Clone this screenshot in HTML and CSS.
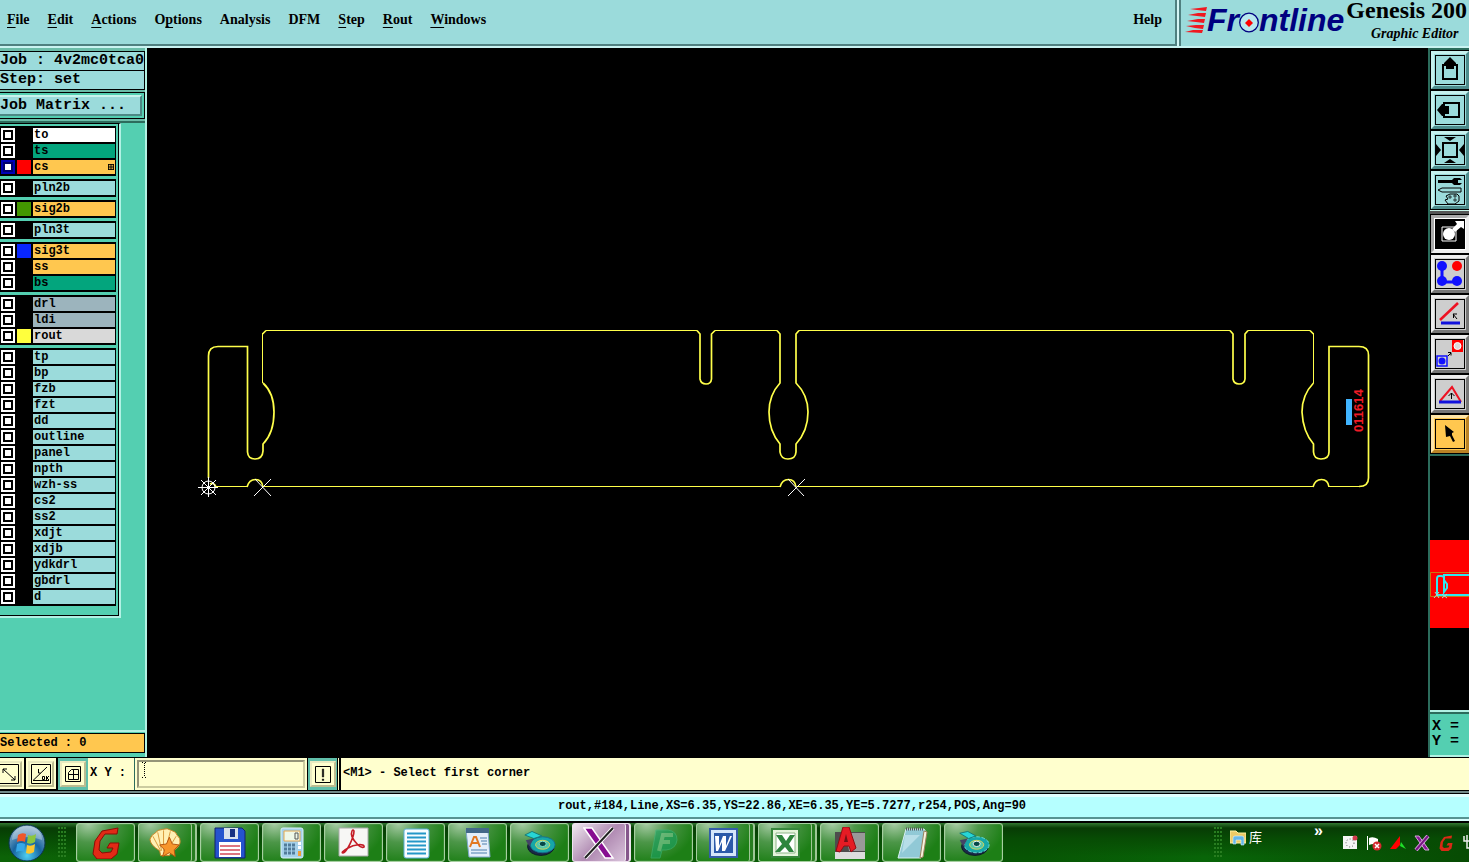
FILE: index.html
```html
<!DOCTYPE html>
<html lang="en">
<head>
<meta charset="utf-8">
<title>Genesis 2000 Graphic Editor</title>
<link rel="stylesheet" href="styles.css">
</head>
<body>
<header class="header">
  <nav class="menubar">
    <button><u>F</u>ile</button>
    <button><u>E</u>dit</button>
    <button><u>A</u>ctions</button>
    <button>O<u>p</u>tions</button>
    <button>Analysis</button>
    <button>DFM</button>
    <button><u>S</u>tep</button>
    <button><u>R</u>out</button>
    <button><u>W</u>indows</button>
    <button class="help">Help</button>
  </nav>
  <div class="brand">
    <div class="logo">
      <svg width="22" height="26" viewBox="0 0 22 26"><g fill="#f01820"><path d="M5 2l9-1 8-1-1 4-9-1zM3 8l10-2h8l-1 4-8-1zM2 14l11-2h7l-1 4-8-1zM1 19l10-1h8l-1 4-8-1zM0 25l8-2h10l-1 3z"/></g></svg>
      <span>Fr</span><svg width="20" height="26" viewBox="0 0 20 26"><circle cx="10" cy="15.500" r="9.300" fill="#b8e8ee" stroke="#000080" stroke-width="1.300"/><path d="M10 12l4 4-4 4-4-4z" fill="red"/></svg><span>ntline</span>
    </div>
    <div class="product">
      <div class="product-name">Genesis 200</div>
      <div class="product-module">Graphic Editor</div>
    </div>
  </div>
</header>

<main class="workspace">
  <aside class="sidebar">
    <div class="job">
      <div class="readout">Job : 4v2mc0tca0</div>
      <div class="readout">Step: set</div>
      <div class="matrix-frame"><button class="matrix">Job Matrix ...</button></div>
    </div>
    <div class="layers-area">
      <div class="layers">
        <div class="group">
          <label class="layer"><input type="checkbox"><i></i><span class="white">to</span></label>
          <label class="layer"><input type="checkbox"><i></i><span class="green">ts</span></label>
          <label class="layer"><input type="checkbox" checked><i class="sw-red"></i><span class="amber">cs<svg width="6" height="6" viewBox="0 0 5 5"><path d="M0 .5h5M0 2.5h5M0 4.5h5M.5 0v5M2.5 0v5M4.5 0v5" stroke="#000" stroke-width=".8"/></svg></span></label>
        </div>
        <div class="group">
          <label class="layer"><input type="checkbox"><i></i><span>pln2b</span></label>
        </div>
        <div class="group">
          <label class="layer"><input type="checkbox"><i class="sw-green"></i><span class="amber">sig2b</span></label>
        </div>
        <div class="group">
          <label class="layer"><input type="checkbox"><i></i><span>pln3t</span></label>
        </div>
        <div class="group">
          <label class="layer"><input type="checkbox"><i class="sw-blue"></i><span class="amber">sig3t</span></label>
          <label class="layer"><input type="checkbox"><i></i><span class="amber">ss</span></label>
          <label class="layer"><input type="checkbox"><i></i><span class="green">bs</span></label>
        </div>
        <div class="group">
          <label class="layer"><input type="checkbox"><i></i><span class="slate">drl</span></label>
          <label class="layer"><input type="checkbox"><i></i><span class="slate">ldi</span></label>
          <label class="layer"><input type="checkbox"><i class="sw-yellow"></i><span class="grey">rout</span></label>
        </div>
        <div class="group">
          <label class="layer"><input type="checkbox"><i></i><span>tp</span></label>
          <label class="layer"><input type="checkbox"><i></i><span>bp</span></label>
          <label class="layer"><input type="checkbox"><i></i><span>fzb</span></label>
          <label class="layer"><input type="checkbox"><i></i><span>fzt</span></label>
          <label class="layer"><input type="checkbox"><i></i><span>dd</span></label>
          <label class="layer"><input type="checkbox"><i></i><span>outline</span></label>
          <label class="layer"><input type="checkbox"><i></i><span>panel</span></label>
          <label class="layer"><input type="checkbox"><i></i><span>npth</span></label>
          <label class="layer"><input type="checkbox"><i></i><span>wzh-ss</span></label>
          <label class="layer"><input type="checkbox"><i></i><span>cs2</span></label>
          <label class="layer"><input type="checkbox"><i></i><span>ss2</span></label>
          <label class="layer"><input type="checkbox"><i></i><span>xdjt</span></label>
          <label class="layer"><input type="checkbox"><i></i><span>xdjb</span></label>
          <label class="layer"><input type="checkbox"><i></i><span>ydkdrl</span></label>
          <label class="layer"><input type="checkbox"><i></i><span>gbdrl</span></label>
          <label class="layer"><input type="checkbox"><i></i><span>d</span></label>
        </div>
      </div>
    </div>
    <div class="selected">Selected : 0</div>
  </aside>

  <section class="canvas">
    <svg viewBox="147 48 1281 709" preserveAspectRatio="xMinYMin meet" fill="none">
      <g stroke="#ffff4a" shape-rendering="crispEdges">
        <path d="M266 330.500H697M715 330.500H777M799 330.500H1230M1248 330.500H1310M262.500 333V383M1313.500 333V383M215 486.500H248M263 486.500H780M797 486.500H1313M1329 486.500H1360M711.500 334V379"/>
      </g>
      <g stroke="#ffff4a" stroke-width="1.700">
        <path d="M208.500 478V356Q208.500 346.500 218 346.500H247.500V452Q248 459 255 459Q262.500 459 263 451V444Q274 433 274 412Q274 393 263 383M262.500 334L266 330.500"/>
        <path d="M697 330.500L700 334V379Q701 384 706 384Q711 384 711.500 379V334L715 330.500"/>
        <path d="M777 330.500L780 334V383Q769 395 769 412Q769 431 780 444V452Q781 459 788 459Q795.500 459 796 452V444Q808 431 808 412Q808 395 796 383V334L799 330.500"/>
        <path d="M1230 330.500L1233 334V379Q1234 384 1239 384Q1244.500 384 1245 379V334L1248 330.500M1310 330.500L1313.500 334"/>
        <path d="M1313.500 383Q1302 395 1302 412Q1303 432 1313.500 444V452Q1314 459 1321 459Q1329 459 1329 452V346.500H1359Q1368.500 346.500 1368.500 355V478Q1368.500 486.500 1359 486.500"/>
        <path d="M247 487Q249 479.500 255.500 479.500T263 487M780 487Q782 479.500 788.500 479.500T796 487M1313 487Q1315 479.500 1321.500 479.500T1329 487M210 484q4-2 6 3"/>
      </g>
      <g stroke="#fff">
        <path d="M198 487.500h20M208.500 477v20M201 480l15 15M216 480l-15 15M255 479l16 17M271 479l-17 17M788 479l16 17M805 479l-17 17"/>
        <circle cx="208.500" cy="487.500" r="6.500"/>
      </g>
      <path d="M1346 399h6v26h-6z" fill="#40b4ff"/>
      <text class="part-number" transform="translate(1363 432) rotate(-90)">011614</text>
    </svg>
  </section>

  <aside class="tools">
    <div class="toolset">
      <button aria-label="Pan up"><svg viewBox="0 0 30 30"><path d="M8 10h14v14H8z" fill="none" stroke="#000" stroke-width="2"/><path d="M15 2l6 6v2h-2v4h-8v-4H9V8z"/></svg></button>
      <button aria-label="Pan left"><svg viewBox="0 0 30 30"><path d="M9 8h15v14H9z" fill="none" stroke="#000" stroke-width="2"/><path d="M2 15l5-6h2v2h5v8H9v2H7z"/></svg></button>
      <button aria-label="Zoom"><svg viewBox="0 0 30 30"><path d="M8 8h14v14H8z" fill="none" stroke="#000" stroke-width="2"/><path d="M9 2h12l-6 4zM9 28h12l-6-4zM1 9l5 6-5 6zM29 9l-5 6 5 6z"/></svg></button>
      <button aria-label="Setup"><svg viewBox="0 0 30 30"><path d="M3 5h14l2-2h6l2 2h-4v3h4l-2 2h-6l-2-2H3z"/><path d="M3 15l4-2h19v4H7z" fill="none" stroke="#000"/><path d="M11 21l4-2h7l2 2v5l-4 3h-7l-3-4 3-1z" fill="none" stroke="#000"/><path d="M14 21h2v2h-2zM19 20h2v2h-2zM19 24h2v2h-2z" fill="none" stroke="#000" stroke-width=".700"/></svg></button>
    </div>
    <div class="toolset edit">
      <button class="reverse" aria-label="Select feature"><svg viewBox="0 0 30 30"><path d="M0 0h30v30H0z"/><path d="M7 8h14v14H7z" fill="none" stroke="#fff"/><circle cx="14" cy="15" r="6" fill="#fff"/><path d="M17 10l5-5-2-3h9v8l-3-2-6 5z" fill="#fff"/></svg></button>
      <button aria-label="Net"><svg viewBox="0 0 30 30"><path d="M7 7v16h16" fill="none" stroke="#11f" stroke-width="3"/><g fill="#11f"><circle cx="7" cy="7" r="5"/><circle cx="7" cy="22" r="5"/><circle cx="22" cy="22" r="5"/></g><circle cx="22" cy="7" r="5" fill="red"/></svg></button>
      <button aria-label="Angle"><svg viewBox="0 0 30 30"><path d="M5 21L23 4" stroke="#e12" stroke-width="2.500"/><path d="M6 24h19" stroke="#11d" stroke-width="3"/><path d="M18 15h4M18.500 15v4M18 15l4 5" stroke="#000"/></svg></button>
      <button aria-label="Move"><svg viewBox="0 0 30 30"><path d="M17 1h11v12H17z" fill="red"/><circle cx="22.500" cy="7" r="3.500" fill="#ddd" stroke="#fff"/><path d="M2 17h10v10H2z" fill="none" stroke="#11f" stroke-width="1.500"/><circle cx="7" cy="22" r="3.500" fill="#11f"/><path d="M13 17l3-3M13 13.500h3v3" fill="none" stroke="#000"/></svg></button>
      <button aria-label="Triangle"><svg viewBox="0 0 30 30"><path d="M5 22L17 8l9 15" fill="none" stroke="#e12" stroke-width="2"/><path d="M4 23h22" stroke="#11d" stroke-width="3"/><path d="M16.500 20v-6M13.500 17l3-3 3 3" fill="none" stroke="#000"/></svg></button>
      <button class="pick" aria-label="Pointer"><svg viewBox="0 0 30 30"><path d="M10 6l9 7-2 1v2l3 6-2 1-3-6-4 1z"/></svg></button>
    </div>
    <div class="overview">
      <svg viewBox="0 0 39 88"><path d="M0 0h39v88H0z" fill="red"/><path d="M39 32.500H.500v24H39" fill="none" stroke="#c87814"/><path d="M39 35H14v5l3 4v4l-3 4V38q0-2-3-2H9q-2 0-2 3v16h32" fill="none" stroke="#2fe8f0" stroke-width="2"/><path d="M5 52l4 6M9 52l-5 6M12 54l5 4M17 54l-5 4" stroke="#adc"/></svg>
    </div>
    <div class="coords">X =<br>Y =</div>
  </aside>
</main>

<div class="command">
  <button class="cmd first" aria-label="Snap line"><svg viewBox="0 0 20 20"><path d="M.500 .500h19v19H.500z" fill="none" stroke="#000"/><path d="M4 5l12 11M4 9V5h4M16 12v4h-4" fill="none" stroke="#000"/></svg></button>
  <button class="cmd" aria-label="Snap angle"><svg viewBox="0 0 20 20"><path d="M.500 .500h19v19H.500z" fill="none" stroke="#000"/><path d="M2 16.500L16 3M2 16.500h16M7.500 5v4h2M11.500 12.500h2v3h-2zM15.500 12v4M18 12l-2 2 2 2" fill="none" stroke="#000"/></svg></button>
  <button class="cmd active" aria-label="Grid"><svg viewBox="0 0 20 20"><path d="M2.500 2.500h15v15h-15z" fill="none" stroke="#000"/><path d="M5.500 8.500l3-3h7v10h-10zM10.500 5v10M5 10.500h10" fill="none" stroke="#000"/></svg></button>
  <label for="xy">X Y :</label>
  <div class="entry">
    <input id="xy" type="text">
    <svg class="ibeam" width="5" height="16" viewBox="0 0 5 16"><path d="M2.500 1v14M0 .500h2M3 .500h2M0 15.500h2M3 15.500h2" stroke="#000" stroke-dasharray="1 1"/></svg>
  </div>
  <button class="cmd active alert" aria-label="Alert"><svg viewBox="0 0 20 20"><path d="M2.500 2.500h15v16h-15z" fill="none" stroke="#000"/><path d="M9.300 5h1.400v8H9.300zM9.300 15h1.400v1.500H9.300z" stroke="#000" stroke-width=".500"/></svg></button>
  <output class="message">&lt;M1&gt; - Select first corner</output>
</div>
<div class="status">rout,#184,Line,XS=6.35,YS=22.86,XE=6.35,YE=5.7277,r254,POS,Ang=90</div>

<footer class="taskbar">
  <button class="start" aria-label="Start"><svg viewBox="0 0 38 38">
    <defs><radialGradient id="orb" cx=".5" cy=".85" r=".8"><stop offset="0" stop-color="#4fd0f4"/><stop offset=".5" stop-color="#1764a0"/><stop offset="1" stop-color="#8fb4cc"/></radialGradient></defs>
    <circle cx="19" cy="19" r="18" fill="url(#orb)" stroke="#0b3550"/><path d="M4 16a15 14 0 0130 0q-15-6-30 0z" fill="#fff" opacity=".3"/>
    <path d="M10 11q4-3 8-1l-1 8q-4-2-8 0z" fill="#f0572a"/><path d="M20 11q4 2 8-1l-1 8q-4 3-8 1z" fill="#8cc63f"/><path d="M9 20q4-2 8 0l-1 8q-4-2-8 0z" fill="#35a8e8"/><path d="M19 21q4 2 8-1l-1 8q-4 3-8 1z" fill="#fdc72f"/></svg></button>
  <div class="grip"></div>
  <div class="tasks">
    <button class="task" aria-label="Genesis"><svg viewBox="0 0 32 32"><path d="M28 1l-1 6H15l-5 7-1 9 3 3 9-1 2-4h-6l3-5h9l-2 11-6 5H7l-4-5 2-13 7-10z" fill="#e22a16" stroke="#8b0d06"/></svg></button>
    <button class="task stack" aria-label="Shell"><svg viewBox="-1 0 33 32"><path d="M11 29l-1-5Q0 18 0 12q2-5 5-6 3-4 8-4 5-2 9 1 5 1 6 5 4 3 3 8-2 6-9 9l-2 4z" fill="#fff0b4" stroke="#c98222"/><path d="M11 24L3 9M12 24L8 5M14 24l0-21M16 24l5-20M18 24L27 9" stroke="#d99a3c"/><path d="M20 10l3 7 7 1-5 5 1 7-6-4-7 4 2-7-5-5 7-1z" fill="#f7962c" stroke="#b5560f"/></svg></button>
    <button class="task" aria-label="Commander"><svg viewBox="0 0 32 32"><path d="M1 1h27l3 3v27H1z" fill="#2553ce" stroke="#13236b"/><path d="M10 1h14v11H10z" fill="#d9e0ec"/><path d="M16 2h5v8h-5z" fill="#172f82"/><path d="M5 15h22v15H5z" fill="#fff"/><path d="M6 19h20M6 23h20M6 27h20" stroke="#d44a58" stroke-width="1.500"/></svg></button>
    <button class="task" aria-label="Calculator"><svg viewBox="0 0 32 32"><rect x="5" y="1" width="22" height="30" rx="2" fill="#a5d1ea" stroke="#dcf2fb"/><path d="M8 4h16v10H8z" fill="#eff8e9" stroke="#e5a750"/><path d="M19 6h3v6h-3z" fill="none" stroke="#555"/><path d="M8 18h12M8 22h12M8 26h12" stroke="#527c9a" stroke-width="3" stroke-dasharray="3 1"/><path d="M22 16.500h3M22 20.500h3" stroke="#fff" stroke-width="3"/><path d="M22 24h3v5h-3z" fill="#efa039"/></svg></button>
    <button class="task" aria-label="PDF reader"><svg viewBox="0 0 32 32"><path d="M1 1h29v28H1z" fill="#f7f7f5" stroke="#aaa"/><path d="M14 4c-2 4 1 9 6 14 3 3 7 3 6 1s-9-2-16 2c-5 3-7 5-5 5 4-1 11-16 11-22q-1-2-2 0z" fill="none" stroke="#c41c26" stroke-width="1.600"/></svg></button>
    <button class="task" aria-label="Document"><svg viewBox="0 0 32 32"><rect x="4" y="2" width="25" height="29" rx="2" fill="#f8fdff" stroke="#5ab0d8"/><path d="M7 6.500h19M7 10.500h19M7 14.500h19M7 18.500h19M7 22.500h19M7 26.500h19" stroke="#2497c8" stroke-width="2"/></svg></button>
    <button class="task" aria-label="WordPad"><svg viewBox="0 0 32 32"><path d="M4 3h22l2 27H7z" fill="#e3effa" stroke="#7fa8cc"/><path d="M4 1h23v5H4z" fill="#426889"/><path d="M8 20l4-10h2l4 10M10 16h6" fill="none" stroke="#e27922" stroke-width="2"/><path d="M18 11h7M19 14h6M20 17h5M9 23h16M9 26h16" stroke="#4c7ead"/></svg></button>
    <button class="task" aria-label="Disc"><svg viewBox="0 0 36 32"><ellipse cx="19" cy="20" rx="15" ry="10" fill="#1a2947" stroke="#0a1523"/><ellipse cx="21" cy="18" rx="14" ry="9" fill="#16a7a7" stroke="#176b8d"/><ellipse cx="21" cy="18" rx="8" ry="5" fill="#55c8a8" stroke="#e3d454"/><ellipse cx="21" cy="17" rx="4" ry="3" fill="#064848" stroke="#8ef0d8"/><path d="M1 7l8-4 11 5-9 3z" fill="#27d5d5" stroke="#177"/><path d="M2 13l9-2-5 9z" fill="#446"/></svg></button>
    <button class="task current stack" aria-label="X server"><svg viewBox="0 0 32 32"><path d="M1 1h8l21 30h-8z" fill="#870e91" stroke="#fff" stroke-width="1.500"/><path d="M30 1L2 31" stroke="#fff" stroke-width="4"/><path d="M30 1L2 31" stroke="#222" stroke-width="2"/></svg></button>
    <button class="task" aria-label="F program"><svg class="faded" viewBox="0 0 32 32"><path d="M8 3h12q9 1 9 10-1 9-11 10h-4l-2 8H3z" fill="#16a060" stroke="#3ab77d"/><path d="M11 24l4-16h10M13 15h9" fill="none" stroke="#76ca91" stroke-width="4"/></svg></button>
    <button class="task stack" aria-label="Word"><svg viewBox="0 0 32 32"><path d="M3 2h27v28H3z" fill="#d5e7fa" stroke="#345da8" stroke-width="2"/><path d="M7 6h19v20H7z" fill="#2b5aa9"/><path d="M8 9h4v10l4-10h3v10l4-10h2l-7 15h-3V15l-4 9H9z" fill="#fff"/></svg></button>
    <button class="task stack" aria-label="Excel"><svg viewBox="0 0 32 32"><path d="M3 2h27v28H3z" fill="#e5f4dc" stroke="#36863b" stroke-width="2"/><path d="M7 6h19v20H7z" fill="#fff" stroke="#8eb68a"/><path d="M7 8h6l4 6 4-6h5l-6 9 5 8h-5l-4-5-5 5H6l7-8z" fill="#2e853e"/></svg></button>
    <button class="task" aria-label="AutoCAD"><svg viewBox="0 0 32 32"><path d="M1 5h30v27H1z" fill="#4d4d4d"/><path d="M12 6h19v18H15z" fill="#999"/><path d="M1 25h30v7H1z" fill="#ddd"/><path d="M9 0h6l7 21-5 4-2-6h-5l-4 6-4-1z" fill="#e51b24" stroke="#930c13"/><path d="M12 7l-2 8h4z" fill="#731116"/></svg></button>
    <button class="task" aria-label="Notepad"><svg viewBox="0 0 32 32"><path d="M10 2h18l2 3-5 26H2z" fill="#91c9d6" stroke="#d9f0f2"/><path d="M28 4l3 1-4 25-3 1z" fill="#f6f2df" stroke="#9b825e"/><path d="M10 2h18" stroke="#555" stroke-width="3" stroke-dasharray="1 1"/><path d="M9 8h15L6 26z" fill="#d0edf3" opacity=".6"/></svg></button>
    <button class="task" aria-label="Disc"><svg viewBox="0 0 36 32"><ellipse cx="19" cy="20" rx="15" ry="10" fill="#1a2947" stroke="#0a1523"/><ellipse cx="21" cy="18" rx="14" ry="9" fill="#16a7a7" stroke="#70e0db" stroke-dasharray="4 2"/><ellipse cx="21" cy="18" rx="8" ry="5" fill="#55c8a8" stroke="#e3d454"/><ellipse cx="21" cy="17" rx="4" ry="3" fill="#064848" stroke="#fff"/><path d="M2 5l9-2 9 5-8 3z" fill="#27d5d5" stroke="#177"/><path d="M2 13l9-2-5 9z" fill="#446"/></svg></button>
  </div>
  <div class="grip"></div>
  <div class="library">
    <svg width="16" height="16" viewBox="0 0 16 16"><path d="M0 1h6l2 2h8v10H0z" fill="#edca65" stroke="#fff0a0"/><path d="M3 14V8q0-2 2-2h7q2 0 2 2v7h-3v-5H6v4z" fill="#64b6e8" stroke="#d6f3ff" stroke-width=".600"/></svg>
    <span>库</span>
  </div>
  <span class="more">»</span>
  <div class="tray">
    <svg viewBox="0 0 16 16"><path d="M1 1h14v13H1z" fill="#f5f5f5"/><circle cx="8" cy="8" r="4" fill="none" stroke="#555" stroke-dasharray="1 2"/><circle cx="13" cy="3" r="2.500" fill="#d23b4d"/></svg>
    <svg viewBox="0 0 16 16"><path d="M1.500 1v14" stroke="#fff"/><path d="M3 3q4-2 9 1v6q-4-2-9 0z" fill="#fff"/><circle cx="11" cy="11" r="4.500" fill="#d5292e"/><path d="M9 9l4 4M13 9l-4 4" stroke="#fff" stroke-width="1.500"/></svg>
    <svg viewBox="0 0 16 16"><path d="M0 14L10 1v9L6 14z" fill="red"/><path d="M11 7l5 7-6-3z" fill="#1ee028"/></svg>
    <svg viewBox="0 0 16 16"><path d="M1 1h4l10 14h-4z" fill="#8c1797" stroke="#d2a6d8"/><path d="M14 1L2 15" stroke="#d2a6d8" stroke-width="4"/><path d="M14 1L2 15" stroke="#7a1585" stroke-width="2"/></svg>
    <svg viewBox="0 0 32 32"><path d="M28 1l-1 6H15l-5 7-1 9 3 3 9-1 2-4h-6l3-5h9l-2 11-6 5H7l-4-5 2-13 7-10z" fill="#d92a16"/></svg>
    <svg viewBox="0 0 16 16"><path d="M2 1v5h6V1M5 0v13h4M9 11h7v4H9z" fill="none" stroke="#eee" stroke-width="1.500"/></svg>
  </div>
</footer>
</body>
</html>
```
FILE: styles.css
```css
:root {
  --teal: #54cfb1;
  --aqua: #9bdbdb;
  --cream: #ffffce;
  --amber: #ffc74f;
  --light: #b2f2e4;
  --deep: #2c6c5c;
  --mono: "Liberation Mono", monospace;
}
*, *::before { box-sizing: border-box; }
body {
  margin: 0;
  display: flex;
  flex-direction: column;
  min-height: 100vh;
  overflow: hidden;
  background: #000;
  color: #000;
  font: bold 12px/14px var(--mono);
}
button { margin: 0; padding: 0; border: 0; background: none; color: inherit; font: inherit; }
svg { display: block; flex: none; }

.header { display: flex; height: 48px; background: var(--aqua); border-bottom: 2px solid #c9f3f1; }
.menubar {
  flex: 1;
  display: flex;
  align-items: flex-start;
  gap: 18px;
  padding: 11px 13px 0 7px;
  border-right: 2px solid #4f8080;
  border-bottom: 2px solid #4f8080;
  font: bold 14px/17px "Liberation Serif", serif;
}
.menubar u { text-underline-offset: 3px; text-decoration-thickness: 1px; }
.help { margin-left: auto; }
.brand {
  display: flex;
  width: 292px;
  padding-left: 4px;
  border-left: 2px solid #d3f6f6;
  box-shadow: inset 2px 0 #4f8080;
}
.logo {
  display: flex;
  align-items: flex-start;
  padding: 7px 0 0 2px;
  color: #000080;
  font: italic bold 32px/26px "Liberation Sans", sans-serif;
}
.product { flex: 1; text-align: center; white-space: nowrap; font-family: "Liberation Serif", serif; }
.product-name { padding-bottom: 4px; font-size: 24px; line-height: 20px; }
.product-module { padding-left: 16px; font-size: 14px; font-style: italic; line-height: 20px; }

.workspace { flex: 1; display: flex; min-height: 0; }
.sidebar { display: flex; flex-direction: column; width: 147px; background: var(--teal); border-right: 2px solid var(--light); }
.job { padding: 3px 0 2px; background: #6cbda9; border-bottom: 2px solid var(--deep); }
.readout { height: 20px; margin-bottom: -1px; border: 1px solid #000; border-left: 0; background: var(--aqua); font-size: 15px; line-height: 18px; white-space: nowrap; }
.matrix-frame { margin-top: 3px; padding: 2px 2px 2px 0; border: 1px solid #000; border-left: 0; background: var(--teal); }
.matrix { width: 100%; height: 21px; border: 2px solid; border-color: #c9f3ed #4d8985 #4d8985 #c9f3ed; border-left: 0; background: var(--aqua); font-size: 15px; line-height: 16px; text-align: left; }
.layers-area { flex: 1; border-bottom: 2px solid var(--light); }
.layers { display: flex; flex-direction: column; gap: 3px; width: 121px; padding: 2px 2px 10px 0; border-top: 1px solid #000; border-right: 2px solid var(--light); border-bottom: 2px solid var(--light); box-shadow: inset -1px -1px #000; }
.group { display: grid; gap: 2px; width: 116px; padding: 2px 1px; background: #000; }
.layer { display: grid; grid-template-columns: 14px 14px 1fr; gap: 2px; height: 14px; }
.layer input { appearance: none; width: 14px; height: 14px; margin: 0; padding: 2px; border: 0; background: #fff; }
.layer input::before { content: ""; display: block; width: 10px; height: 10px; border: 2px solid #000; background: #fff; }
.layer input:checked { background: #0000b8; }
.layer input:checked::before { border-color: #00006c; }
.layer span { display: flex; align-items: center; justify-content: space-between; padding: 0 1px; background: var(--aqua); }
.layer .white { background: #fff; }
.layer .green { background: #03a57d; }
.layer .amber { background: var(--amber); }
.layer .slate { background: #9cb4bd; }
.layer .grey { background: #d9d9d9; }
.sw-red { background: red; }
.sw-green { background: #439700; }
.sw-blue { background: #0826ff; }
.sw-yellow { background: #ffff3d; }
.selected { height: 20px; margin: 1px 0 4px; border: 1px solid #000; border-left: 0; background: var(--amber); line-height: 18px; }

.canvas { flex: 1; min-width: 0; }
.canvas svg { width: 100%; height: 100%; }
.part-number { fill: #f01c26; font: bold 13px "Liberation Sans", sans-serif; }

.tools { display: flex; flex-direction: column; width: 41px; border-left: 2px solid var(--deep); }
.toolset { display: flex; flex-direction: column; gap: 2px; padding: 1px 0 1px 1px; border-top: 2px solid var(--deep); border-bottom: 1px solid #c8f4e9; }
.edit { border-top: 3px solid #555; border-bottom: 2px solid var(--deep); }
.toolset button { width: 38px; height: 38px; padding: 1px; border: 3px solid; border-color: #c5f1ee #4d8c8c #4d8c8c #c5f1ee; background: var(--aqua); }
.toolset button svg { width: 30px; height: 30px; outline: 1px solid #000; outline-offset: -1px; }
.edit button { border-color: #eee #777 #777 #eee; background: #cecece; }
.edit .reverse { border-color: #aaa #eee #eee #aaa; background: #fff; }
.edit .pick { border-color: #ffe6a8 #ba8225 #ba8225 #ffe6a8; background: var(--amber); }
.overview { flex: 1; display: flex; align-items: center; padding-top: 2px; }
.overview svg { width: 39px; height: 88px; }
.coords { height: 47px; padding: 7px 0 0 2px; border-top: 2px solid var(--light); border-bottom: 2px solid var(--light); background: var(--teal); box-shadow: inset 0 2px var(--deep); font-size: 15px; line-height: 15px; white-space: nowrap; }

.command { display: flex; height: 34px; border-top: 1px solid #000; border-bottom: 1px solid #000; background: var(--cream); }
.cmd { display: grid; place-items: center; width: 32px; padding: 2px; border-right: 2px solid #000; border-bottom: 1px solid #000; }
.cmd svg { width: 26px; height: 26px; padding: 1px; border: 2px solid; border-color: #eaeac0 #bcbc91 #bcbc91 #eaeac0; background: var(--cream); }
.first { width: 26px; justify-content: end; }
.active { width: 30px; border: 0; background: #60bfaa; }
.command label { width: 46px; padding-left: 2px; line-height: 30px; white-space: pre; }
.entry { position: relative; width: 174px; padding: 2px; border-left: 1px solid var(--deep); border-right: 1px solid #000; }
.entry input { width: 100%; height: 28px; padding: 0 5px; border: 2px solid; border-color: #959578 #cccca0 #cccca0 #959578; outline: 0; background: var(--cream); font: inherit; }
.ibeam { position: absolute; left: 7px; top: 4px; }
.alert { border-right: 1px solid #000; }
.message { flex: 1; padding-left: 2px; margin-left: 1px; border-left: 2px solid #000; line-height: 30px; }
.status { height: 32px; padding: 3px 0 0 115px; border-top: 2px solid #718989; border-bottom: 1px solid #000; background: linear-gradient(#000 1px, #e1ffff 1px 4px, #b5ffff 4px 24px, #579392 24px 26px, #d8ffff 26px 28px, #000 28px 29px, #e8ffff 29px); line-height: 20px; text-align: center; }

.taskbar { display: flex; align-items: stretch; height: 39px; background: linear-gradient(#327832, #073c05 5px, #074c04 16px, transparent 34px), linear-gradient(90deg, #0c6307, #075504 70%, #086508 82%, #074b03); }
.start { width: 54px; padding-left: 8px; }
.start svg { width: 38px; height: 38px; }
.grip { width: 8px; margin: 4px 0; background: radial-gradient(circle at 1px 1px, #287d20 1px, transparent 1px) 0 0 / 3px 4px; }
.start + .grip { margin: 4px 10px 4px 4px; }
.tasks { flex: 1; display: flex; gap: 3px; }
.task { display: grid; place-items: center; width: 59px; height: 39px; border: 1px solid #a6cfa0; border-radius: 3px; background: radial-gradient(ellipse at 20% 0, #a5cba3 0, #4c9648 35%, transparent 75%), #1d7f16; box-shadow: inset 0 0 1px #dcecd9; }
.task svg { width: 32px; height: 32px; }
.faded { opacity: .6; }
.stack { padding-right: 5px; border-right: 2px double #9dc696; box-shadow: inset -3px 0 #267d20, inset -4px 0 #9fc696; }
.current { border-color: #f0e3f0; background: linear-gradient(135deg, #efe9ef, #b08ab2 50%, #ddc9df); box-shadow: inset -3px 0 #85578b, inset -4px 0 #eee; }
.library { display: flex; align-items: flex-start; gap: 3px; width: 92px; padding: 7px 0 0 8px; color: #fff; font: 13px/15px "Liberation Sans", "Noto Sans CJK SC", sans-serif; }
.more { width: 28px; padding-top: 1px; color: #fff; font: bold 16px/14px "Liberation Sans", sans-serif; }
.tray { display: flex; gap: 8px; width: 127px; padding-top: 12px; overflow: hidden; }
.tray svg { width: 16px; height: 16px; }
```
